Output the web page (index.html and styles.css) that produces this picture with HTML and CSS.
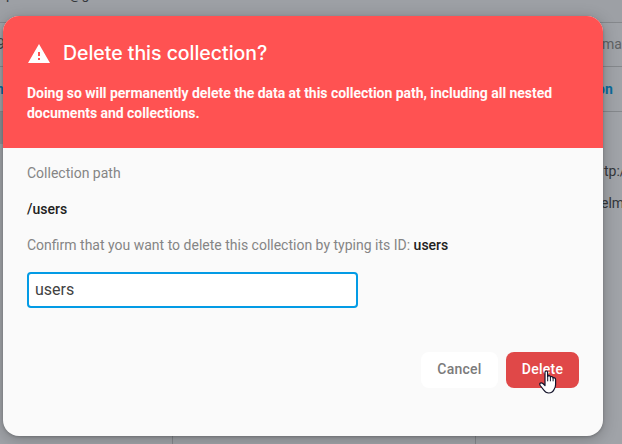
FILE: index.html
```html
<!DOCTYPE html>
<html lang="en">
<head>
<meta charset="utf-8">
<title>Delete this collection?</title>
<link rel="stylesheet" href="styles.css">
</head>
<body>
<div class="page">
  <div class="account"><span>p</span><span class="mail">@g</span></div>
  <div class="crumbs"><span class="clip-left">9</span><span class="clip-domain">ma</span></div>
  <div class="actions"><span class="clip-action">n</span><span class="clip-add">on</span></div>
  <div class="columns">
    <div class="column first"></div>
    <div class="column"></div>
    <div class="column last"><p>tp:/</p><p class="field">elmi</p></div>
  </div>
</div>
<div class="dialog" role="dialog" aria-labelledby="title">
  <header class="header">
    <div class="heading">
      <svg class="warning" viewBox="0 0 24 24"><path fill="currentColor" d="M1 21h22L12 2 1 21zm12-3h-2v-2h2v2zm0-4h-2v-4h2v4z"/></svg>
      <h1 id="title">Delete this collection?</h1>
    </div>
    <p class="message">Doing so will permanently delete the data at this collection path, including all nested documents and collections.</p>
  </header>
  <div class="body">
    <p class="label">Collection path</p>
    <p class="path">/users</p>
    <p class="label">Confirm that you want to delete this collection by typing its ID: <strong>users</strong></p>
    <input class="input" type="text" value="users" aria-label="Collection ID">
  </div>
  <footer class="footer">
    <button class="button cancel">Cancel</button>
    <button class="button delete">Delete</button>
  </footer>
</div>
<svg class="cursor" viewBox="0 0 18 24"><path fill="#fff" stroke="#14142b" stroke-width="1.2" stroke-linejoin="round" d="M6 14V2.200Q6 1 7.300 1Q8.600 1 8.600 2.200V6.500Q9 5.600 10.200 5.700Q11.300 5.800 11.400 7Q12 6.300 13 6.600Q14 6.900 14 8Q14.700 7.500 15.600 7.900Q16.600 8.300 16.600 9.600V14.500Q16.600 17 15.300 19Q13.700 23 9.700 23Q6.500 23 5 20.300L1.200 15.500Q.2 13.800 1.400 13.100Q2.600 12.500 3.900 13.500L6 15.500z"/><path fill="none" stroke="#14142b" stroke-width="1" d="M8.700 6v5.300M11.400 6.700v4.600M14.100 7.700v3.600"/></svg>
</body>
</html>
```

FILE: styles.css
```css
* { box-sizing: border-box; }
body {
  margin: 0;
  width: 622px;
  height: 444px;
  overflow: hidden;
  position: relative;
  font-family: Roboto, sans-serif;
  font-size: 14px;
}
h1, p { margin: 0; }
.page {
  height: 444px;
  display: flex;
  flex-direction: column;
  background: #a0a3a8;
  color: #34373b;
  white-space: nowrap;
}
.account {
  height: 23px;
  border-bottom: 1px solid #85888c;
  background: #9da0a5;
  padding-left: 6px;
  line-height: 16px;
  display: flex;
  align-items: flex-start;
  gap: 55px;
}
.account span { margin-top: -14px; }
.crumbs, .actions {
  height: 44px;
  border-bottom: 1px solid #85888c;
  display: flex;
  justify-content: space-between;
  align-items: center;
}
.crumbs { color: #5f6265; padding-bottom: 2px; }
.clip-left { margin-left: -3px; color: #45484b; }
.clip-domain { width: 20px; }
.actions { height: 45px; color: #0c6b9c; font-weight: 700; }
.clip-action { margin-left: -4px; }
.clip-add { width: 25px; }
.columns {
  flex: 1;
  display: grid;
  grid-template-columns: 173px 303px 1fr;
}
.column { border-right: 1px solid #85888c; }
.first { background: linear-gradient(#8c8f94 32px, transparent 32px); }
.last {
  border: 0;
  padding: 43px 0 0 128px;
  line-height: 32px;
}
.last .field { margin-left: -3px; }
.dialog {
  position: absolute;
  left: 3px;
  top: 16px;
  width: 600px;
  height: 420px;
  display: flex;
  flex-direction: column;
  border-radius: 16px;
  overflow: hidden;
  background: #fafafa;
  box-shadow: 0 1px 3px rgba(0,0,0,.2), 0 3px 16px rgba(0,0,0,.24);
}
.header {
  height: 132px;
  padding: 24px;
  background: #ff5252;
  color: #fff;
}
.heading {
  height: 28px;
  display: flex;
  align-items: center;
  gap: 12px;
}
.warning { width: 24px; height: 24px; }
h1 {
  font: 550 19.5px/26px Inter, sans-serif;
  letter-spacing: -.03px;
  padding-bottom: 2px;
}
.message {
  margin-top: 15px;
  font-weight: 700;
  line-height: 20px;
  letter-spacing: -.036px;
  color: #fffafa;
}
.body {
  flex: 1;
  padding: 15px 24px 0;
}
.label, .path { line-height: 20px; margin-bottom: 16px; }
.label { color: #858585; }
.path, strong { color: #212121; font-weight: 500; }
.input {
  display: block;
  width: 331px;
  height: 36px;
  margin-top: 17px;
  padding: 0 6px 2px;
  border: 2px solid #039be5;
  border-radius: 4px;
  outline: 0;
  background: #fff;
  color: #424242;
  font: 16px Roboto, sans-serif;
}
.footer {
  display: flex;
  justify-content: flex-end;
  gap: 8px;
  padding: 0 24px 48px;
}
.button {
  height: 36px;
  padding: 0 0 2px;
  border: 0;
  border-radius: 8px;
  font: 500 14px Roboto, sans-serif;
  letter-spacing: .25px;
}
.cancel { width: 77px; background: #fff; color: #7b7b7b; }
.delete { width: 73px; background: #e04848; color: #fff; }
.cursor {
  position: absolute;
  left: 539px;
  top: 370px;
  width: 18px;
  height: 24px;
}
```
